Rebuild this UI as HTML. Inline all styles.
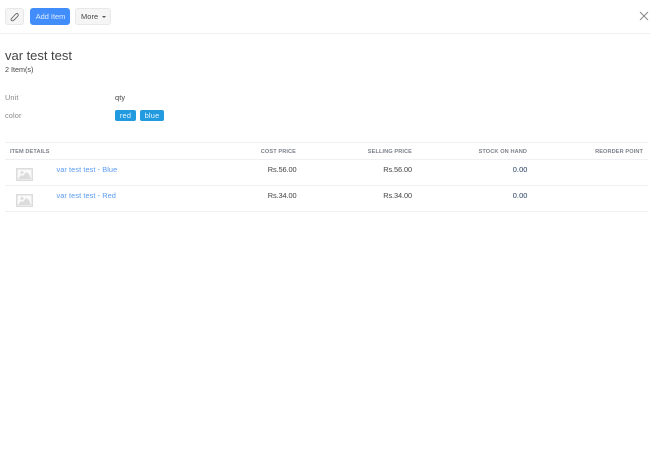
<!DOCTYPE html>
<html><head><meta charset="utf-8"><style>
html,body{margin:0;padding:0;background:#fff}
body{width:650px;height:451px;position:relative;overflow:hidden;font-family:"Liberation Sans",sans-serif;color:#444}
.a{position:absolute;white-space:nowrap;font-size:7.4px;line-height:10px;letter-spacing:.1px}
.r{text-align:right}
.l{position:absolute;height:1px;background:#f0f0f2}
.btn{position:absolute;box-sizing:border-box;border-radius:3px;top:8px;height:17px;border:1px solid #e8e8ea;background:#f5f5f6}
.h{font-size:5.6px;color:#7d808c;font-weight:bold;letter-spacing:.1px;top:147px}
.tag{position:absolute;top:110px;height:11px;line-height:11px;background:#229ae0;color:#e8f5fd;border-radius:2px;text-align:center;font-size:7.4px;letter-spacing:.2px}
.lnk{color:#5a9cf5}
</style></head><body>
<div class="btn" style="left:5px;width:19px"></div>
<svg class="a" style="left:10px;top:12px" width="10" height="10" viewBox="0 0 10 10" fill="none" stroke="#666" stroke-width=".9"><path d="M1.500 8.500c-.6-.6-.5-1.400 0-2l4-4.300c.8-.8 1.800-.8 2.400-.2s.5 1.600-.3 2.400L4 8c-.6.6-1.800 1.100-2.500.5z"/></svg>
<div class="btn" style="left:30px;width:40px;background:#408dfb;border-color:#408dfb"></div>
<div class="a" style="left:30.500px;width:40px;top:12px;text-align:center;color:#e3eeff;letter-spacing:0">Add Item</div>
<div class="btn" style="left:75px;width:36px"></div>
<div class="a" style="left:81px;top:12px;color:#444">More</div>
<div class="a" style="left:102px;top:16px;width:0;height:0;border-left:2px solid transparent;border-right:2px solid transparent;border-top:2px solid #555"></div>
<svg class="a" style="left:639px;top:11px" width="10" height="10" viewBox="0 0 10 10" stroke="#888" stroke-width="1"><path d="M1 1l8 8M9 1l-8 8"/></svg>
<div class="l" style="left:0;top:33px;width:650px"></div>

<div class="a" style="left:5px;top:48px;font-size:13px;line-height:16px;letter-spacing:-.02px;color:#444">var test test</div>
<div class="a" style="left:5px;top:65px;font-size:7.200px;letter-spacing:0;color:#444">2 Item(s)</div>

<div class="a" style="left:5px;top:93px;color:#888">Unit</div>
<div class="a" style="left:115px;top:93px;color:#444">qty</div>
<div class="a" style="left:5px;top:111px;color:#888">color</div>
<div class="tag" style="left:115px;width:21px">red</div>
<div class="tag" style="left:140px;width:24px">blue</div>

<div class="l" style="left:5px;top:142px;width:643px"></div>
<div class="l" style="left:5px;top:159px;width:643px"></div>
<div class="l" style="left:5px;top:185px;width:643px"></div>
<div class="l" style="left:5px;top:211px;width:643px"></div>

<div class="a h" style="left:10px">ITEM DETAILS</div>
<div class="a h r" style="right:354px">COST PRICE</div>
<div class="a h r" style="right:238px">SELLING PRICE</div>
<div class="a h r" style="right:123px">STOCK ON HAND</div>
<div class="a h r" style="right:7px">REORDER POINT</div>

<svg class="a" style="left:16px;top:168px" width="18" height="13" viewBox="0 0 18 13"><rect x=".75" y=".75" width="15.500" height="11.500" fill="#fafafa" stroke="#dcdcdc" stroke-width="1.500"/><circle cx="6" cy="4.500" r="1.500" fill="#dcdcdc"/><path d="M2 11l3-4 2 1 3-4 3 2 2 5z" fill="#dcdcdc"/></svg>
<svg class="a" style="left:16px;top:194px" width="18" height="13" viewBox="0 0 18 13"><rect x=".75" y=".75" width="15.500" height="11.500" fill="#fafafa" stroke="#dcdcdc" stroke-width="1.500"/><circle cx="6" cy="4.500" r="1.500" fill="#dcdcdc"/><path d="M2 11l3-4 2 1 3-4 3 2 2 5z" fill="#dcdcdc"/></svg>

<div class="a lnk" style="left:56.500px;top:165px;letter-spacing:.06px">var test test - Blue</div>
<div class="a lnk" style="left:56.500px;top:191px;letter-spacing:.06px">var test test - Red</div>

<div class="a r" style="right:353.500px;top:165px;letter-spacing:-.1px">Rs.56.00</div>
<div class="a r" style="right:238px;top:165px;letter-spacing:-.1px">Rs.56.00</div>
<div class="a r" style="right:122.500px;top:165px;color:#1f3a5f">0.00</div>
<div class="a r" style="right:353.500px;top:191px;letter-spacing:-.1px">Rs.34.00</div>
<div class="a r" style="right:238px;top:191px;letter-spacing:-.1px">Rs.34.00</div>
<div class="a r" style="right:122.500px;top:191px;color:#1f3a5f">0.00</div>
</body></html>
